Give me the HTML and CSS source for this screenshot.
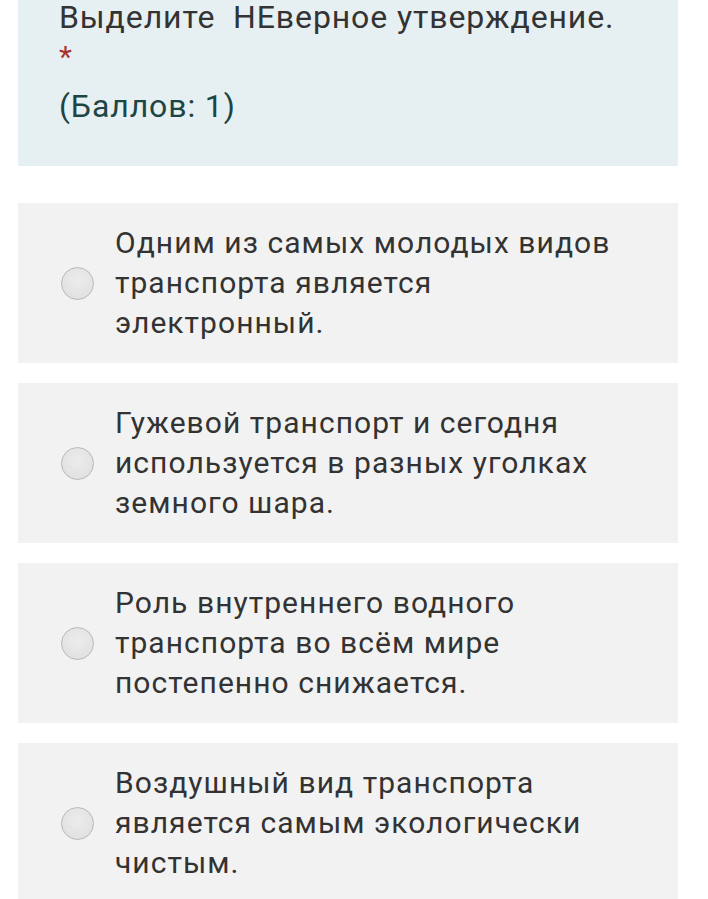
FILE: index.html
```html
<!DOCTYPE html>
<html lang="ru">
<head>
<meta charset="utf-8">
<link rel="stylesheet" href="styles.css">
</head>
<body>
<div class="page">
  <div class="question">
    <div class="title">Выделите &nbsp;НЕверное утверждение.</div>
    <div class="req">*</div>
    <div class="points">(Баллов: 1)</div>
  </div>
  <div class="options">
    <label class="option"><span class="radio"></span><span class="text">Одним из самых молодых видов транспорта является электронный.</span></label>
    <label class="option"><span class="radio"></span><span class="text">Гужевой транспорт и сегодня используется в разных уголках земного шара.</span></label>
    <label class="option"><span class="radio"></span><span class="text">Роль внутреннего водного транспорта во всём мире постепенно снижается.</span></label>
    <label class="option"><span class="radio"></span><span class="text">Воздушный вид транспорта является самым экологически чистым.</span></label>
  </div>
</div>
</body>
</html>
```

FILE: styles.css
```css
html, body {
  margin: 0;
  padding: 0;
  background: #ffffff;
}
body {
  font-family: Roboto, "Noto Sans", sans-serif;
  color: #333333;
  overflow: hidden;
}
.page {
  width: 660px;
  margin-left: 18px;
}
.question {
  background: #e6f0f3;
  padding: 0 20px 40px 41px;
  font-size: 32px;
  line-height: 40px;
  letter-spacing: 0.9px;
}
.title {
  color: #333333;
  white-space: nowrap;
  line-height: 34px;
}
.req {
  color: #a8322d;
  font-size: 30px;
  margin-top: 3px;
}
.points {
  margin-top: 9px;
  color: #1d4544;
}
.options {
  margin-top: 37px;
  display: flex;
  flex-direction: column;
  gap: 20px;
}
.option {
  display: flex;
  align-items: center;
  background: #f2f2f2;
  padding: 20px 40px 20px 43px;
  min-height: 120px;
  font-size: 30px;
  line-height: 40px;
  letter-spacing: 1.05px;
}
.radio {
  flex: 0 0 auto;
  width: 31px;
  height: 31px;
  border-radius: 50%;
  border: 1px solid #b8b8b8;
  background: radial-gradient(circle at 50% 40%, #ececec 0%, #e2e2e2 70%, #d8d8d8 100%);
  margin-right: 21px;
}
.text {
  color: #333333;
}
```
